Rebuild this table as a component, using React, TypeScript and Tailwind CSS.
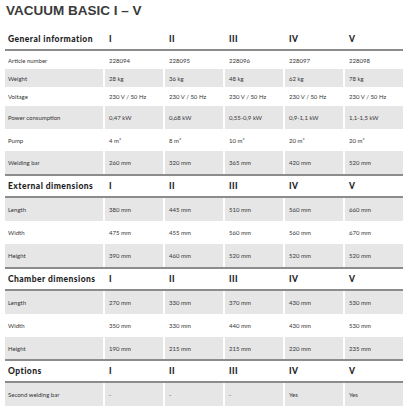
import React from 'react';

type Row = { label: string; values: string[]; gray: boolean; h: string };
type Section = { title: string; rows: Row[] };

const numerals = ['I', 'II', 'III', 'IV', 'V'];

const sections: Section[] = [
  {
    title: 'General information',
    rows: [
      { label: 'Article number', values: ['228094', '228095', '228096', '228097', '228098'], gray: false, h: 'h-[18px]' },
      { label: 'Weight', values: ['28 kg', '36 kg', '48 kg', '62 kg', '78 kg'], gray: true, h: 'h-[18px]' },
      { label: 'Voltage', values: ['230 V / 50 Hz', '230 V / 50 Hz', '230 V / 50 Hz', '230 V / 50 Hz', '230 V / 50 Hz'], gray: false, h: 'h-[19px]' },
      { label: 'Power consumption', values: ['0,47 kW', '0,68 kW', '0,55-0,9 kW', '0,9-1,1 kW', '1,1-1,5 kW'], gray: true, h: 'h-[23px]' },
      { label: 'Pump', values: ['4 m³', '8 m³', '10 m³', '20 m³', '20 m³'], gray: false, h: 'h-[22px]' },
      { label: 'Welding bar', values: ['260 mm', '320 mm', '365 mm', '420 mm', '520 mm'], gray: true, h: 'h-[23px]' },
    ],
  },
  {
    title: 'External dimensions',
    rows: [
      { label: 'Length', values: ['380 mm', '445 mm', '510 mm', '560 mm', '660 mm'], gray: true, h: 'h-[23px]' },
      { label: 'Width', values: ['475 mm', '455 mm', '560 mm', '560 mm', '670 mm'], gray: false, h: 'h-[23px]' },
      { label: 'Height', values: ['390 mm', '460 mm', '520 mm', '520 mm', '520 mm'], gray: true, h: 'h-[23px]' },
    ],
  },
  {
    title: 'Chamber dimensions',
    rows: [
      { label: 'Length', values: ['270 mm', '330 mm', '370 mm', '430 mm', '530 mm'], gray: true, h: 'h-[23px]' },
      { label: 'Width', values: ['350 mm', '330 mm', '440 mm', '430 mm', '530 mm'], gray: false, h: 'h-[23px]' },
      { label: 'Height', values: ['190 mm', '215 mm', '215 mm', '220 mm', '235 mm'], gray: true, h: 'h-[22px]' },
    ],
  },
  {
    title: 'Options',
    rows: [
      { label: 'Second welding bar', values: ['-', '-', '-', 'Yes', 'Yes'], gray: true, h: 'h-[23px]' },
    ],
  },
];

const grid = 'grid grid-cols-[98px_repeat(5,58px)] gap-x-[2px]';

export default function App() {
  return (
    <div className="w-[416px] h-[410px] bg-white overflow-hidden pl-[5px] pt-[3px]">
      <h1 className="font-['Liberation_Sans',Arial,sans-serif] font-bold text-[13.5px] leading-[16px] text-[#3a3a3a] pl-px">
        VACUUM BASIC I – V
      </h1>

      <div className="w-[398px] mt-[10px] font-['Lato','Open_Sans',sans-serif]">
        {sections.map((section, si) => (
          <div key={section.title} className={si > 0 ? 'border-t-2 border-[#8c8c8c]' : ''}>
            {/* header */}
            <div className={`${grid} h-[22px] items-center border-b-2 border-[#8c8c8c]`}>
              <div className="pl-[3px] text-[8.5px] font-black text-[#1e1e1e] tracking-[0.45px]">
                {section.title}
              </div>
              {numerals.map((n) => (
                <div key={n} className="pl-[4px] text-[8.5px] font-black text-[#1e1e1e] tracking-[0.4px]">
                  {n}
                </div>
              ))}
            </div>

            {/* rows */}
            {section.rows.map((row, ri) => (
              <div key={ri} className={`${grid} ${row.h}`}>
                <div className={`flex items-center pl-[3px] text-[6px] text-[#353535] ${row.gray ? 'bg-[#e6e6e7]' : ''}`}>
                  {row.label}
                </div>
                {row.values.map((v, vi) => (
                  <div
                    key={vi}
                    className={`flex items-center pl-[4px] text-[6px] text-[#353535] ${row.gray ? 'bg-[#e6e6e7]' : ''}`}
                  >
                    {v}
                  </div>
                ))}
              </div>
            ))}
          </div>
        ))}
      </div>
    </div>
  );
}
